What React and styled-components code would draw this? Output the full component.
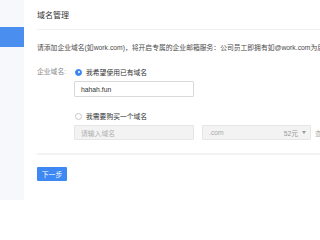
import React from "react";
import styled, { createGlobalStyle } from "styled-components";

const Global = createGlobalStyle`
  html, body { margin: 0; padding: 0; background: #fff; }
  body { font-family: "Liberation Sans", "Noto Sans CJK SC", sans-serif; }
  * { box-sizing: border-box; }
`;

const Page = styled.div`
  display: flex;
  width: 320px;
  height: 200px;
  overflow: hidden;
`;

const Sidebar = styled.div`
  width: 24px;
  flex: none;
  background: #f6f8fb;
  padding-top: 27px;
`;

const NavItem = styled.div`
  height: 20px;
  background: ${(p) => (p.$active ? "#4a8ef0" : "transparent")};
`;

const Main = styled.div`
  flex: 1;
  min-width: 0;
  padding-left: 13px;
  overflow: hidden;
`;

const Header = styled.div`
  height: 30px;
  border-bottom: 1px solid #f0f0f0;
  display: flex;
  align-items: center;
  font-size: 8px;
  color: #333;
`;

const Desc = styled.div`
  margin-top: 13px;
  font-size: 6.8px;
  line-height: 10px;
  color: #4a4a4a;
  white-space: nowrap;
`;

const FormRow = styled.div`
  display: flex;
  margin-top: 14px;
`;

const Label = styled.div`
  width: 37px;
  flex: none;
  font-size: 6.8px;
  line-height: 10px;
  color: #888;
  white-space: nowrap;
`;

const Options = styled.div`
  display: flex;
  flex-direction: column;
`;

const RadioLine = styled.div`
  display: flex;
  align-items: center;
  gap: 4px;
  height: 10px;
  font-size: 6.8px;
  color: #333;
  white-space: nowrap;
  margin-top: ${(p) => p.$mt || 0}px;
  padding-left: 1px;
`;

const RadioDot = styled.span`
  width: 7px;
  height: 7px;
  border-radius: 50%;
  flex: none;
  border: 1px solid ${(p) => (p.$checked ? "#3b86f2" : "#c8c8c8")};
  background: ${(p) => (p.$checked ? "#3b86f2" : "#fff")};
  display: flex;
  align-items: center;
  justify-content: center;
  &::after {
    content: "";
    width: 2px;
    height: 2px;
    border-radius: 50%;
    background: ${(p) => (p.$checked ? "#fff" : "transparent")};
  }
`;

const FieldRow = styled.div`
  display: flex;
  align-items: center;
  gap: 8px;
  margin-top: 4px;
  white-space: nowrap;
`;

const TextInput = styled.div`
  width: 120px;
  height: ${(p) => (p.$disabled ? 15 : 16)}px;
  flex: none;
  border: 1px solid ${(p) => (p.$disabled ? "#e6e6e6" : "#d9d9d9")};
  background: ${(p) => (p.$disabled ? "#f3f3f3" : "#fff")};
  border-radius: 1px;
  padding-left: 6px;
  display: flex;
  align-items: center;
  font-size: 6.8px;
  color: ${(p) => (p.$placeholder ? "#b0b0b0" : "#333")};
`;

const Select = styled.div`
  width: 109px;
  height: 15px;
  flex: none;
  border: 1px solid #e6e6e6;
  background: #f3f3f3;
  border-radius: 1px;
  padding: 0 4px 0 6px;
  display: flex;
  align-items: center;
  font-size: 6.8px;
  color: #aaa;
`;

const SelectValue = styled.span`
  flex: 1;
`;

const Price = styled.span`
  color: #999;
`;

const Caret = styled.span`
  margin-left: 4px;
  width: 0;
  height: 0;
  border-left: 2px solid transparent;
  border-right: 2px solid transparent;
  border-top: 3px solid #999;
`;

const Trailing = styled.span`
  font-size: 6.8px;
  color: #aaa;
  margin-left: -4px;
`;

const Divider = styled.div`
  margin-top: 13px;
  height: 2px;
  background: #f3f3f3;
`;

const Button = styled.button`
  margin-top: 12px;
  width: 30px;
  height: 14px;
  border: none;
  border-radius: 1px;
  background: #3d88f3;
  color: #fff;
  font-family: inherit;
  font-size: 6.8px;
  padding: 0;
  display: flex;
  align-items: center;
  justify-content: center;
`;

export default function App() {
  return (
    <>
      <Global />
      <Page>
        <Sidebar>
          <NavItem $active />
        </Sidebar>
        <Main>
          <Header>域名管理</Header>
          <Desc>
            请添加企业域名(如work.com)，将开启专属的企业邮箱服务：公司员工即拥有如@work.com为后缀的邮箱地址
          </Desc>
          <FormRow>
            <Label>企业域名:</Label>
            <Options>
              <RadioLine>
                <RadioDot $checked />
                我希望使用已有域名
              </RadioLine>
              <FieldRow>
                <TextInput>hahah.fun</TextInput>
              </FieldRow>
              <RadioLine $mt={14}>
                <RadioDot />
                我需要购买一个域名
              </RadioLine>
              <FieldRow>
                <TextInput $disabled $placeholder>
                  请输入域名
                </TextInput>
                <Select>
                  <SelectValue>.com</SelectValue>
                  <Price>52元</Price>
                  <Caret />
                </Select>
                <Trailing>查询</Trailing>
              </FieldRow>
            </Options>
          </FormRow>
          <Divider />
          <Button>下一步</Button>
        </Main>
      </Page>
    </>
  );
}
